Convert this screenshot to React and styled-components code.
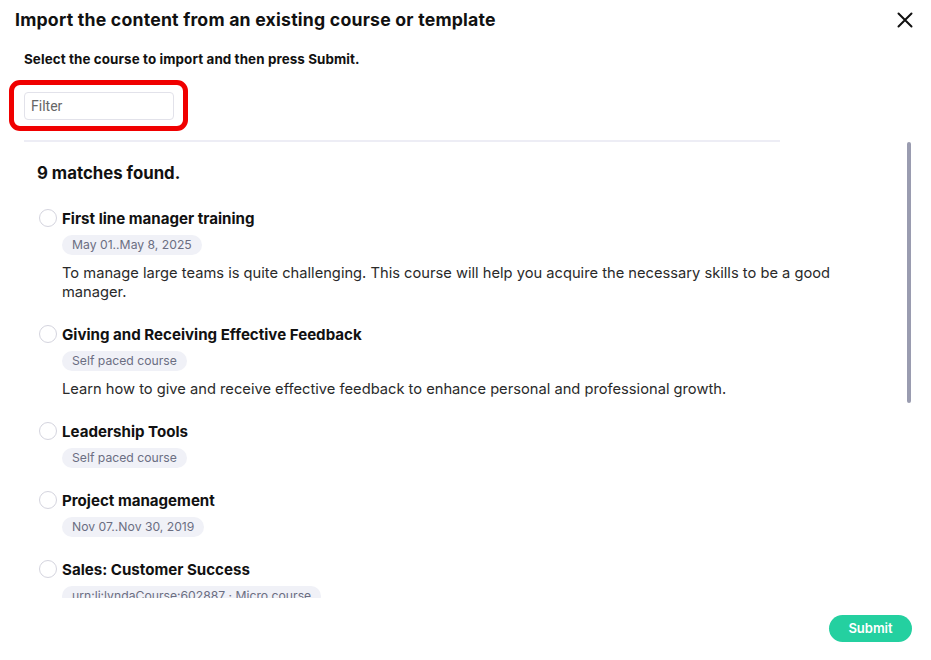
import React from "react"
import styled, {createGlobalStyle} from "styled-components"

const GlobalStyle = createGlobalStyle`
    html, body {
        margin: 0;
        padding: 0;
        background: #fff;
        font-family: Inter, "Open Sans", sans-serif;
        color: #111;
    }
`

const courses = [
    {id: 1, title: "First line manager training", tag: "May 01..May 8, 2025",
        desc: "To manage large teams is quite challenging. This course will help you acquire the necessary skills to be a good manager."},
    {id: 2, title: "Giving and Receiving Effective Feedback", tag: "Self paced course",
        desc: "Learn how to give and receive effective feedback to enhance personal and professional growth."},
    {id: 3, title: "Leadership Tools", tag: "Self paced course"},
    {id: 4, title: "Project management", tag: "Nov 07..Nov 30, 2019"},
    {id: 5, title: "Sales: Customer Success", tag: "urn:li:lyndaCourse:602887 · Micro course"},
]

const Modal = styled.div`
    width: 931px;
    height: 660px;
    display: flex;
    flex-direction: column;
    background: #fff;
    overflow: hidden;
`

const Header = styled.div`
    display: flex;
    align-items: center;
    justify-content: space-between;
    padding: 10px 18px 0 15px;
    height: 20px;
`

const Title = styled.h1`
    margin: 0;
    font-size: 17.7px;
    font-weight: 700;
    line-height: 20px;
    letter-spacing: 0.2px;
`

const CloseButton = styled.button`
    border: 0;
    background: none;
    padding: 0;
    width: 16px;
    height: 16px;
    display: flex;
    cursor: pointer;
`

const Body = styled.div`
    padding-left: 24px;
    display: flex;
    flex-direction: column;
`

const Subtitle = styled.p`
    margin: 20px 0 0;
    font-size: 13.4px;
    font-weight: 700;
    line-height: 18px;
    letter-spacing: 0.1px;
`

const Highlight = styled.div`
    align-self: flex-start;
    margin: 12px 0 0 -15px;
    padding: 7px 9px 6px 10px;
    border: 5px solid #f00000;
    border-radius: 11px;
    display: flex;
`

const FilterInput = styled.input`
    width: 150px;
    height: 28px;
    box-sizing: border-box;
    border: 1px solid #e2e2ea;
    border-radius: 4px;
    padding: 0 6px;
    font-family: Roboto, "Open Sans", sans-serif;
    font-size: 14px;
    color: #333;
    outline: none;
    &::placeholder { color: #666; }
`

const Divider = styled.div`
    width: 756px;
    height: 1.5px;
    background: #ededf5;
    margin-top: 9px;
`

const ScrollRow = styled.div`
    display: flex;
    height: 456px;
`

const List = styled.div`
    flex: 1;
    overflow: hidden;
    padding: 21px 60px 0 13px;
    display: flex;
    flex-direction: column;
    gap: 23px;
`

const Matches = styled.h2`
    margin: 0 0 3px;
    font-size: 16.8px;
    font-weight: 700;
    line-height: 20px;
`

const Item = styled.div`
    display: grid;
    grid-template-columns: 18px 1fr;
    column-gap: 5px;
    align-items: start;
    margin-left: 2px;
`

const Radio = styled.span`
    width: 18px;
    height: 18px;
    box-sizing: border-box;
    border: 1.5px solid #d4d4de;
    border-radius: 50%;
`

const ItemText = styled.div`
    display: flex;
    flex-direction: column;
    align-items: flex-start;
`

const ItemTitle = styled.div`
    font-size: 15.1px;
    font-weight: 700;
    line-height: 20px;
    color: #111;
`

const Tag = styled.span`
    margin-top: 6px;
    height: 20px;
    line-height: 20px;
    padding: 0 10px;
    border-radius: 10px;
    background: #f0f1f7;
    color: #6b6e82;
    font-size: 12.2px;
`

const Desc = styled.p`
    margin: 9px 0 0;
    font-size: 14.7px;
    line-height: 19px;
    color: #2a2a2a;
`

const Track = styled.div`
    width: 4px;
    margin-right: 20px;
    display: flex;
    flex-direction: column;
`

const Thumb = styled.div`
    width: 4px;
    height: 261px;
    border-radius: 2px;
    background: #9a9cb0;
`

const Footer = styled.div`
    display: flex;
    justify-content: flex-end;
    padding: 17px 19px 0 0;
`

const SubmitButton = styled.button`
    width: 83px;
    height: 27px;
    border: 0;
    border-radius: 14px;
    background: #24d0a0;
    color: #fff;
    font-family: Inter, sans-serif;
    font-size: 13px;
    font-weight: 600;
    cursor: pointer;
`

const App = () => {
    return (
        <Modal>
            <GlobalStyle/>
            <Header>
                <Title>Import the content from an existing course or template</Title>
                <CloseButton aria-label="Close">
                    <svg width="16" height="16" viewBox="0 0 16 16">
                        <path d="M1.5 1.5 L14.5 14.5 M14.5 1.5 L1.5 14.5" stroke="#111" strokeWidth="2" strokeLinecap="round"/>
                    </svg>
                </CloseButton>
            </Header>
            <Body>
                <Subtitle>Select the course to import and then press Submit.</Subtitle>
                <Highlight>
                    <FilterInput placeholder="Filter"/>
                </Highlight>
                <Divider/>
                <ScrollRow>
                    <List>
                        <Matches>9 matches found.</Matches>
                        {courses.map((c) => (
                            <Item key={c.id}>
                                <Radio/>
                                <ItemText>
                                    <ItemTitle>{c.title}</ItemTitle>
                                    <Tag>{c.tag}</Tag>
                                    {c.desc && <Desc>{c.desc}</Desc>}
                                </ItemText>
                            </Item>
                        ))}
                    </List>
                    <Track>
                        <Thumb/>
                    </Track>
                </ScrollRow>
            </Body>
            <Footer>
                <SubmitButton>Submit</SubmitButton>
            </Footer>
        </Modal>
    )
}

export default App;
